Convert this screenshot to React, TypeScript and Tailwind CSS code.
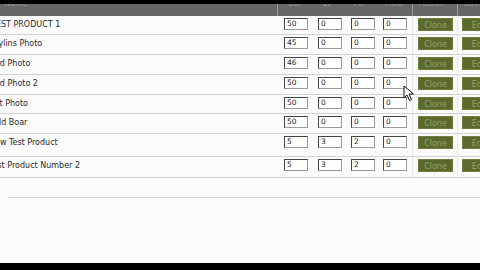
import React from 'react';

const rows = [
  { name: 'TEST PRODUCT 1', v: ['50', '0', '0', '0'], h: 'h-[19px]', off: '-ml-[9px]' },
  { name: 'Skylins Photo', v: ['45', '0', '0', '0'], h: 'h-[20px]', off: '-ml-[11px]' },
  { name: 'Bird Photo', v: ['46', '0', '0', '0'], h: 'h-[20px]', off: '-ml-[11px]' },
  { name: 'Bird Photo 2', v: ['50', '0', '0', '0'], h: 'h-[20px]', off: '-ml-[11px]' },
  { name: 'Cat Photo', v: ['50', '0', '0', '0'], h: 'h-[19px]', off: '-ml-[11px]' },
  { name: 'Wild Boar', v: ['50', '0', '0', '0'], h: 'h-[20px]', off: '-ml-[11px]' },
  { name: 'New Test Product', v: ['5', '3', '2', '0'], h: 'h-[23px]', off: '-ml-[11px]' },
  { name: 'Test Product Number 2', v: ['5', '3', '2', '0'], h: 'h-[21px]', off: '-ml-[11px]' },
];

const font = { fontFamily: '"DejaVu Sans", Verdana, sans-serif' };
const cols = 'grid grid-cols-[278px_35px_33px_33px_34px_45px_1fr]';

const Box = ({ value }: { value: string }) => (
  <div className="w-[24px] h-[12px] bg-white border border-[#9a9a9a] border-t-[#444] border-l-[#444] text-[7.5px] leading-[10px] pl-[2px] text-[#222]">
    {value}
  </div>
);

const Btn = ({ label }: { label: string }) => (
  <div className="w-[35px] h-[13px] bg-[#5b6a2c] text-[#93a160] text-[8px] leading-[13px] text-center border border-[#6f7d3d] whitespace-nowrap overflow-hidden">
    {label}
  </div>
);

export default function App() {
  return (
    <div className="relative w-[480px] h-[270px] overflow-hidden bg-[#fbfbfb]" style={font}>
      <div className="h-[4px] bg-black" />
      <div className={`${cols} h-[12px] bg-[#676767] text-[#9c9c9c] text-[8px] leading-[8px] overflow-hidden`}>
        <div className="border-r border-[#9a9a9a] -mt-[4px] pl-1">Name</div>
        <div className="-mt-[4px] pl-[10px]">Stk</div>
        <div className="-mt-[4px] pl-[10px]">Lt</div>
        <div className="-mt-[4px] pl-[8px]">Ht</div>
        <div className="-mt-[4px] pl-[6px] border-r border-[#9a9a9a]">Flow</div>
        <div className="-mt-[4px] pl-[6px] border-r border-[#9a9a9a]">Action</div>
        <div className="-mt-[4px] pl-[6px]">Save</div>
      </div>
      {rows.map((r) => (
        <div key={r.name} className={`${cols} ${r.h} border-b border-[#d2d2d2] text-[8px] text-[#2a2a2a]`}>
          <div className="overflow-hidden whitespace-nowrap pt-[3px] leading-[11px]">
            <span className={`${r.off} inline-block`}>{r.name}</span>
          </div>
          <div className="pl-[6px] pt-[2px]"><Box value={r.v[0]} /></div>
          <div className="pl-[5px] pt-[2px]"><Box value={r.v[1]} /></div>
          <div className="pl-[5px] pt-[2px]"><Box value={r.v[2]} /></div>
          <div className="pl-[4px] pt-[2px] border-r border-[#e8e8e8]"><Box value={r.v[3]} /></div>
          <div className="pl-[5px] pt-[2px] border-r border-[#e8e8e8]"><Btn label="Clone" /></div>
          <div className="pl-[4px] pt-[2px]"><Btn label="Edit" /></div>
        </div>
      ))}
      <div className="h-[20px] ml-[8px] border-b border-[#d6d6d6]" />
      <div className="absolute left-0 right-0 bottom-0 h-[7px] bg-black" />
      <svg className="absolute left-[403px] top-[85px]" width="12" height="17" viewBox="0 0 12 17">
        <path d="M1 1 L1 13 L4 10 L6.5 15.5 L8.5 14.5 L6 9 L10.5 9 Z" fill="#fff" stroke="#111" strokeWidth="1" strokeLinejoin="round" />
      </svg>
    </div>
  );
}
